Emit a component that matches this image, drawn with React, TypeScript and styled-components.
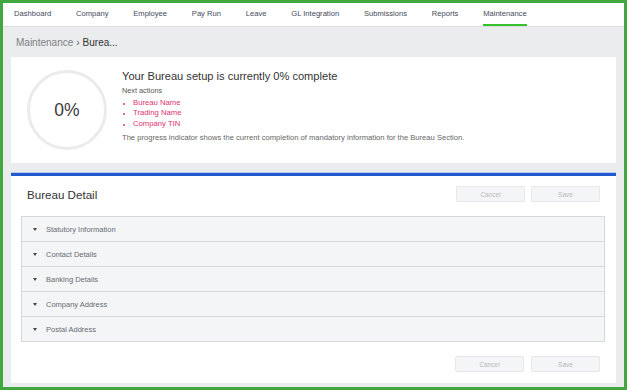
import styled, { createGlobalStyle } from "styled-components";

const navItems = [
  "Dashboard",
  "Company",
  "Employee",
  "Pay Run",
  "Leave",
  "GL Integration",
  "Submissions",
  "Reports",
  "Maintenance",
];

const nextActions = ["Bureau Name", "Trading Name", "Company TIN"];

const sections = [
  "Statutory Information",
  "Contact Details",
  "Banking Details",
  "Company Address",
  "Postal Address",
];

export default function App() {
  return (
    <>
      <GlobalStyle />
      <Frame>
        <Nav>
          {navItems.map((item) => (
            <NavItem key={item} $active={item === "Maintenance"}>
              {item}
            </NavItem>
          ))}
        </Nav>
        <Main>
          <Breadcrumb>
            <Crumb>Maintenance</Crumb>
            <Sep>›</Sep>
            <Current>Burea...</Current>
          </Breadcrumb>

          <ProgressCard>
            <Ring>0%</Ring>
            <Info>
              <Headline>Your Bureau setup is currently 0% complete</Headline>
              <Label>Next actions</Label>
              <Actions>
                {nextActions.map((a) => (
                  <li key={a}>{a}</li>
                ))}
              </Actions>
              <Note>
                The progress indicator shows the current completion of mandatory
                information for the Bureau Section.
              </Note>
            </Info>
          </ProgressCard>

          <DetailCard>
            <DetailHeader>
              <DetailTitle>Bureau Detail</DetailTitle>
              <Buttons>
                <Button disabled>Cancel</Button>
                <Button disabled>Save</Button>
              </Buttons>
            </DetailHeader>
            <Accordion>
              {sections.map((s) => (
                <Row key={s}>
                  <Caret />
                  {s}
                </Row>
              ))}
            </Accordion>
            <Footer>
              <Button disabled>Cancel</Button>
              <Button disabled>Save</Button>
            </Footer>
          </DetailCard>
        </Main>
      </Frame>
    </>
  );
}

const GlobalStyle = createGlobalStyle`
  body {
    margin: 0;
    font-family: "Liberation Sans", Arial, sans-serif;
  }
`;

const Frame = styled.div`
  width: 627px;
  height: 390px;
  box-sizing: border-box;
  border: 3px solid #43a73f;
  display: flex;
  flex-direction: column;
  background: #ebeced;
  overflow: hidden;
`;

const Nav = styled.div`
  height: 23px;
  flex-shrink: 0;
  background: #fff;
  border-bottom: 1px solid #dcdddf;
  display: flex;
  align-items: stretch;
  gap: 24.8px;
  padding-left: 11px;
`;

const NavItem = styled.div<{ $active?: boolean }>`
  font-size: 7.6px;
  color: #3f4a5a;
  display: flex;
  align-items: center;
  box-sizing: border-box;
  border-bottom: 2px solid ${(p) => (p.$active ? "#35c22e" : "transparent")};
`;

const Main = styled.div`
  flex: 1;
  display: flex;
  flex-direction: column;
  padding: 0 8px;
`;

const Breadcrumb = styled.div`
  height: 30px;
  flex-shrink: 0;
  display: flex;
  align-items: center;
  gap: 3px;
  padding-left: 5px;
  font-size: 10px;
`;

const Crumb = styled.span`
  color: #7b7f85;
`;

const Sep = styled.span`
  color: #555;
`;

const Current = styled.span`
  color: #333;
`;

const ProgressCard = styled.div`
  height: 106px;
  flex-shrink: 0;
  background: #fff;
  box-sizing: border-box;
  display: flex;
  align-items: center;
  padding-left: 16px;
  gap: 15px;
`;

const Ring = styled.div`
  width: 80px;
  height: 80px;
  box-sizing: border-box;
  border: 3px solid #ebebeb;
  border-radius: 50%;
  display: flex;
  align-items: center;
  justify-content: center;
  font-size: 17.5px;
  color: #3a3a3a;
`;

const Info = styled.div`
  display: flex;
  flex-direction: column;
  padding-bottom: 8px;
`;

const Headline = styled.div`
  font-size: 11.1px;
  color: #333;
  margin-bottom: 4px;
`;

const Label = styled.div`
  font-size: 7.3px;
  color: #555;
`;

const Actions = styled.ul`
  margin: 3px 0 4px;
  padding-left: 11px;
  font-size: 7.7px;
  line-height: 10.3px;
  color: #e0336e;

  li::marker {
    font-size: 6px;
  }
`;

const Note = styled.div`
  font-size: 7.6px;
  color: #666;
`;

const DetailCard = styled.div`
  margin-top: 10px;
  height: 210px;
  flex-shrink: 0;
  background: #fff;
  border-top: 3px solid #2458d0;
  box-shadow: 0 -1px 0 #b9c9ee;
  box-sizing: border-box;
  display: flex;
  flex-direction: column;
  padding: 0 11px 0 10px;
`;

const DetailHeader = styled.div`
  height: 40px;
  display: flex;
  align-items: center;
  justify-content: space-between;
  padding: 0 5px 4px 6px;
  box-sizing: border-box;
`;

const DetailTitle = styled.div`
  font-size: 11.6px;
  color: #333;
`;

const Buttons = styled.div`
  display: flex;
  gap: 6px;
`;

const Button = styled.button`
  width: 69px;
  height: 16px;
  box-sizing: border-box;
  border: 1px solid #e6e7e9;
  border-radius: 2px;
  background: #f4f5f6;
  color: #b8b9bc;
  font-family: "Liberation Sans", Arial, sans-serif;
  font-size: 6.5px;
  padding: 0;
`;

const Accordion = styled.div`
  border: 1px solid #d6d7d9;
  border-bottom: none;
  display: flex;
  flex-direction: column;
`;

const Row = styled.div`
  height: 25px;
  box-sizing: border-box;
  border-bottom: 1px solid #d6d7d9;
  background: #f4f5f7;
  display: flex;
  align-items: center;
  padding-left: 11px;
  font-size: 7.5px;
  color: #666b72;
`;

const Caret = styled.span`
  width: 0;
  height: 0;
  border-left: 2.5px solid transparent;
  border-right: 2.5px solid transparent;
  border-top: 3px solid #444;
  margin-right: 9px;
`;

const Footer = styled.div`
  display: flex;
  justify-content: flex-end;
  gap: 7px;
  padding: 14px 5px 0 0;
`;
